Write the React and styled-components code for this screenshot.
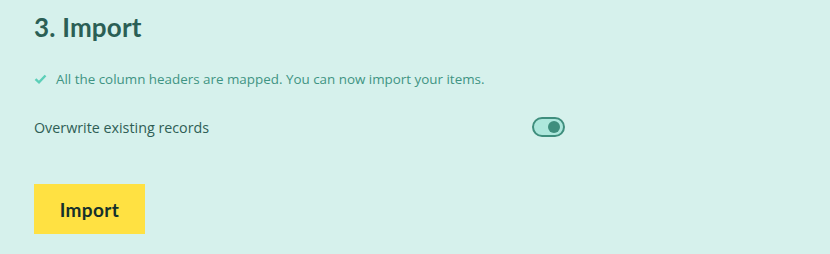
import React, { useState } from 'react';
import styled, { createGlobalStyle } from 'styled-components';

const GlobalStyle = createGlobalStyle`
    html, body {
        margin: 0;
        padding: 0;
        background: #d6f1ec;
    }
`;

const Page = styled.div`
    width: 830px;
    height: 254px;
    box-sizing: border-box;
    padding: 11px 0 0 34px;
    background: #d6f1ec;
    font-family: "Open Sans", "Noto Sans", sans-serif;
`;

const Heading = styled.h2`
    margin: 0;
    font-family: Lato, "Noto Sans", sans-serif;
    font-size: 26px;
    font-weight: 700;
    line-height: 32px;
    letter-spacing: 0.2px;
    color: #2b5f55;
`;

const Notice = styled.div`
    display: flex;
    align-items: center;
    gap: 9px;
    margin-top: 27px;
    font-size: 13.4px;
    color: #3f9483;
`;

const Row = styled.div`
    display: flex;
    align-items: center;
    justify-content: space-between;
    width: 531px;
    margin-top: 29px;
    font-size: 14.3px;
    color: #2f5e55;
`;

const Toggle = styled.button`
    position: relative;
    width: 33px;
    height: 20px;
    padding: 0;
    box-sizing: border-box;
    border: 2px solid #3f8e7d;
    border-radius: 10px;
    background: #ade7dc;
    cursor: pointer;

    &::after {
        content: '';
        position: absolute;
        top: 2px;
        left: ${({ $on }) => ($on ? '14px' : '2px')};
        width: 12px;
        height: 12px;
        border-radius: 50%;
        background: #3f8e7d;
    }
`;

const ImportButton = styled.button`
    margin-top: 47px;
    width: 111px;
    height: 50px;
    border: none;
    background: #ffe142;
    font-family: Lato, "Noto Sans", sans-serif;
    font-size: 19px;
    font-weight: 700;
    letter-spacing: 0.4px;
    color: #15302b;
    cursor: pointer;
`;

const Check = () => (
    <svg width="13" height="10" viewBox="0 0 13 10">
        <path d="M1.5 5.2 L5 8.3 L11.5 1.5" fill="none" stroke="#5ccfb8" strokeWidth="2.4" />
    </svg>
);

const App = () => {
    const [overwrite, setOverwrite] = useState(true);

    return (
        <Page>
            <GlobalStyle />
            <Heading>3. Import</Heading>
            <Notice>
                <Check />
                All the column headers are mapped. You can now import your items.
            </Notice>
            <Row>
                Overwrite existing records
                <Toggle $on={overwrite} onClick={() => setOverwrite(!overwrite)} />
            </Row>
            <ImportButton>Import</ImportButton>
        </Page>
    );
};

export default App;
